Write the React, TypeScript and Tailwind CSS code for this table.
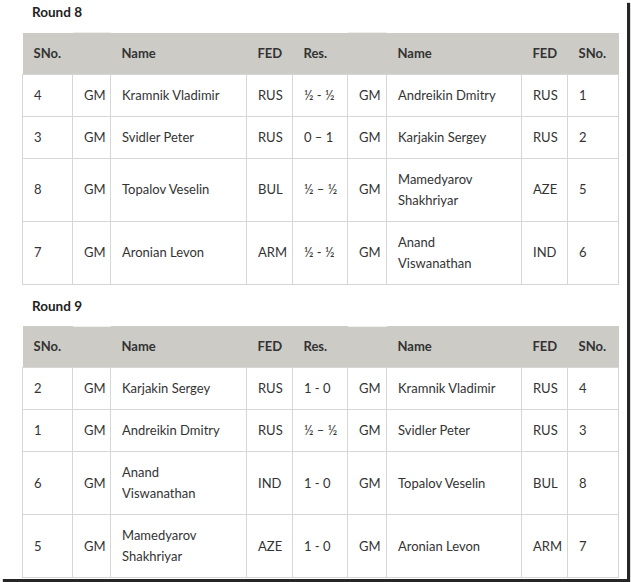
import React from 'react';

type Game = {
  s1: string;
  n1: string[];
  f1: string;
  res: string;
  n2: string[];
  f2: string;
  s2: string;
};

const round8: Game[] = [
  { s1: '4', n1: ['Kramnik Vladimir'], f1: 'RUS', res: '½ - ½', n2: ['Andreikin Dmitry'], f2: 'RUS', s2: '1' },
  { s1: '3', n1: ['Svidler Peter'], f1: 'RUS', res: '0 – 1', n2: ['Karjakin Sergey'], f2: 'RUS', s2: '2' },
  { s1: '8', n1: ['Topalov Veselin'], f1: 'BUL', res: '½ – ½', n2: ['Mamedyarov', 'Shakhriyar'], f2: 'AZE', s2: '5' },
  { s1: '7', n1: ['Aronian Levon'], f1: 'ARM', res: '½ - ½', n2: ['Anand', 'Viswanathan'], f2: 'IND', s2: '6' },
];

const round9: Game[] = [
  { s1: '2', n1: ['Karjakin Sergey'], f1: 'RUS', res: '1 - 0', n2: ['Kramnik Vladimir'], f2: 'RUS', s2: '4' },
  { s1: '1', n1: ['Andreikin Dmitry'], f1: 'RUS', res: '½ – ½', n2: ['Svidler Peter'], f2: 'RUS', s2: '3' },
  { s1: '6', n1: ['Anand', 'Viswanathan'], f1: 'IND', res: '1 - 0', n2: ['Topalov Veselin'], f2: 'BUL', s2: '8' },
  { s1: '5', n1: ['Mamedyarov', 'Shakhriyar'], f1: 'AZE', res: '1 - 0', n2: ['Aronian Levon'], f2: 'ARM', s2: '7' },
];

const td = 'border border-[#d6d6d6] px-[11px] py-[10px] align-middle whitespace-nowrap';
const th = 'bg-[#cccbc6] px-[11px] py-[10px] text-left font-bold align-middle';

const Name: React.FC<{ lines: string[] }> = ({ lines }) => (
  <>
    {lines.map((l, i) => (
      <React.Fragment key={i}>
        {i > 0 && <br />}
        {l}
      </React.Fragment>
    ))}
  </>
);

const RoundTable: React.FC<{ title: string; games: Game[] }> = ({ title, games }) => (
  <section>
    <h3 className="pl-[32px] font-bold text-[13.5px] leading-[21px] text-[#222]">{title}</h3>
    <table className="ml-[22px] mt-[9px] w-[596px] table-fixed border-collapse">
      <thead>
        <tr>
          <th className={`${th} w-[50px]`}>SNo.</th>
          <th className={`${th} w-[38px] border-t border-t-[#eeeeea]`}></th>
          <th className={`${th} w-[136px]`}>Name</th>
          <th className={`${th} w-[46px]`}>FED</th>
          <th className={`${th} w-[55px]`}>Res.</th>
          <th className={`${th} w-[39px] border-t border-t-[#eeeeea]`}></th>
          <th className={`${th} w-[135px]`}>Name</th>
          <th className={`${th} w-[46px]`}>FED</th>
          <th className={`${th} w-[51px]`}>SNo.</th>
        </tr>
      </thead>
      <tbody>
        {games.map((g, i) => (
          <tr key={i}>
            <td className={td}>{g.s1}</td>
            <td className={td}>GM</td>
            <td className={td}>
              <Name lines={g.n1} />
            </td>
            <td className={td}>{g.f1}</td>
            <td className={td}>{g.res}</td>
            <td className={td}>GM</td>
            <td className={td}>
              <Name lines={g.n2} />
            </td>
            <td className={td}>{g.f2}</td>
            <td className={td}>{g.s2}</td>
          </tr>
        ))}
      </tbody>
    </table>
  </section>
);

export default function App() {
  return (
    <div className="w-[631px] h-[582px] bg-white overflow-hidden">
      <div
        className="w-[627px] h-[579px] bg-white pt-[2px] text-[13px] leading-[21px] text-[#333] shadow-[3px_3px_1px_rgba(0,0,0,0.85)]"
        style={{ fontFamily: 'Lato, "Open Sans", sans-serif' }}
      >
        <RoundTable title="Round 8" games={round8} />
        <div className="h-[11px]" />
        <RoundTable title="Round 9" games={round9} />
      </div>
    </div>
  );
}
